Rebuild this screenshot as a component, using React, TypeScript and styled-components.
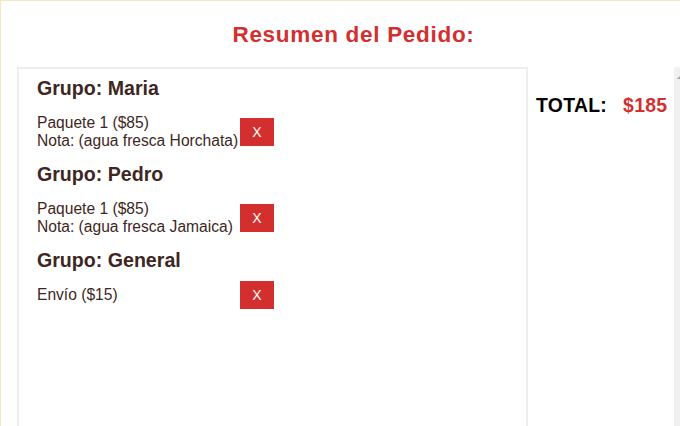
import React from "react";
import styled, { createGlobalStyle } from "styled-components";

const GlobalStyle = createGlobalStyle`
  html, body { margin: 0; padding: 0; background: #ffffff; }
  body { font-family: "Liberation Sans", Arial, sans-serif; overflow: hidden; }
  #root { width: 680px; height: 426px; }
`;

const Frame = styled.div`
  box-sizing: border-box;
  width: 680px;
  height: 426px;
  border-top: 1px solid #f6e6c4;
  border-left: 1px solid #f6e6c4;
  display: flex;
  flex-direction: column;
  overflow: hidden;
`;

const Title = styled.h2`
  margin: 0;
  padding: 21px 0 0 26px;
  height: 45px;
  box-sizing: content-box;
  text-align: center;
  font-size: 22.5px;
  letter-spacing: 0.7px;
  line-height: 25px;
  font-weight: bold;
  color: #d32f2f;
`;

const Body = styled.div`
  flex: 1;
  display: flex;
  padding-left: 16px;
  min-height: 0;
`;

const OrderPanel = styled.div`
  box-sizing: border-box;
  width: 511px;
  flex: none;
  border: 2px solid #eeeeee;
  border-bottom: none;
  padding: 8px 18px 0;
`;

const Group = styled.section`
  margin-bottom: 9px;
`;

const GroupTitle = styled.h3`
  margin: 0 0 10px;
  font-size: 19.6px;
  line-height: 22px;
  font-weight: bold;
  color: #3e2723;
`;

const ItemRow = styled.div`
  display: flex;
  align-items: center;
`;

const ItemText = styled.div`
  width: 200px;
  padding: 4.5px 0;
  font-size: 15.6px;
  line-height: 18px;
  color: #3e2723;
  white-space: nowrap;
`;

const RemoveButton = styled.button`
  margin-left: 3px;
  width: 34px;
  height: 28px;
  border: none;
  padding: 0;
  background: #d32f2f;
  color: #ffffff;
  font-family: "Liberation Sans", Arial, sans-serif;
  font-size: 14px;
  font-weight: normal;
  cursor: pointer;
`;

const Side = styled.aside`
  flex: 1;
  display: flex;
`;

const TotalLine = styled.div`
  flex: 1;
  padding: 27px 0 0 8px;
  display: flex;
  align-items: baseline;
  gap: 16px;
  font-size: 19.4px;
  letter-spacing: 0.3px;
  line-height: 22px;
  font-weight: bold;
`;

const TotalLabel = styled.span`
  color: #000000;
`;

const TotalValue = styled.span`
  color: #d32f2f;
`;

const ScrollTrack = styled.div`
  width: 6px;
  flex: none;
  background: #f0f0f0;
  position: relative;
  &::before {
    content: "";
    position: absolute;
    top: 8px;
    left: 3px;
    width: 0;
    height: 0;
    border-left: 4px solid transparent;
    border-right: 4px solid transparent;
    border-bottom: 4px solid #a3a3a3;
  }
`;

type Item = { lines: string[] };
type GroupData = { name: string; items: Item[] };

const groups: GroupData[] = [
  { name: "Maria", items: [{ lines: ["Paquete 1 ($85)", "Nota: (agua fresca Horchata)"] }] },
  { name: "Pedro", items: [{ lines: ["Paquete 1 ($85)", "Nota: (agua fresca Jamaica)"] }] },
  { name: "General", items: [{ lines: ["Envío ($15)"] }] },
];

export default function App() {
  return (
    <>
      <GlobalStyle />
      <Frame>
        <Title>Resumen del Pedido:</Title>
        <Body>
          <OrderPanel>
            {groups.map((g) => (
              <Group key={g.name}>
                <GroupTitle>Grupo: {g.name}</GroupTitle>
                {g.items.map((it, i) => (
                  <ItemRow key={i}>
                    <ItemText>
                      {it.lines.map((l, j) => (
                        <div key={j}>{l}</div>
                      ))}
                    </ItemText>
                    <RemoveButton>X</RemoveButton>
                  </ItemRow>
                ))}
              </Group>
            ))}
          </OrderPanel>
          <Side>
            <TotalLine>
              <TotalLabel>TOTAL:</TotalLabel>
              <TotalValue>$185</TotalValue>
            </TotalLine>
            <ScrollTrack />
          </Side>
        </Body>
      </Frame>
    </>
  );
}
